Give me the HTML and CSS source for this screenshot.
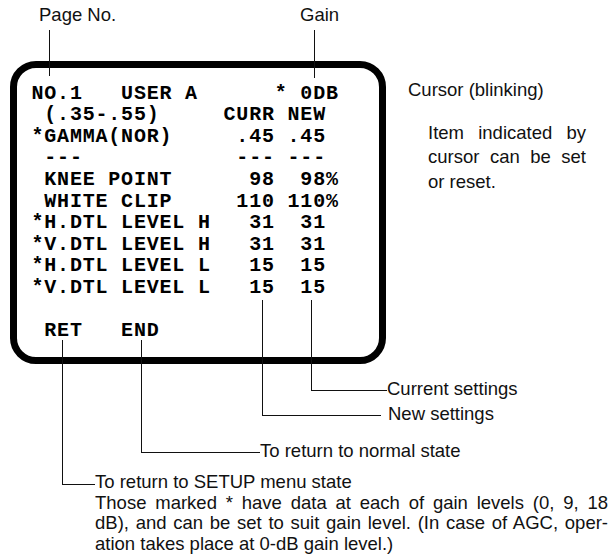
FILE: index.html
```html
<!DOCTYPE html>
<html lang="en">
<head>
  <meta charset="UTF-8">
  <title>Camera Setup Menu</title>
  <link rel="stylesheet" href="styles.css">
</head>
<body>
  <div class="figure">
    <div class="labels-top">
      <span class="label page-no">Page No.</span>
      <span class="label gain">Gain</span>
    </div>

    <div class="main">
      <div class="screen">
<pre class="screen-text">NO.1   USER A      * 0DB
 (.35-.55)     CURR NEW
*GAMMA(NOR)     .45 .45
 ---            --- ---
 KNEE POINT      98  98%
 WHITE CLIP     110 110%
*H.DTL LEVEL H   31  31
*V.DTL LEVEL H   31  31
*H.DTL LEVEL L   15  15
*V.DTL LEVEL L   15  15

 RET   END</pre>
      </div>
      <div class="cursor-note">
        <p class="note-title">Cursor (blinking)</p>
        <p class="note-body">
          <span class="just">Item indicated by</span>
          <span class="just">cursor can be set</span>
          <span>or reset.</span>
        </p>
      </div>
    </div>

    <div class="callouts">
      <p class="callout current">Current settings</p>
      <p class="callout new">New settings</p>
      <p class="callout normal">To return to normal state</p>
      <div class="callout setup">
        <span>To return to SETUP menu state</span>
        <span class="just">Those marked * have data at each of gain levels (0, 9, 18</span>
        <span class="just">dB), and can be set to suit gain level. (In case of AGC, oper-</span>
        <span>ation takes place at 0-dB gain level.)</span>
      </div>
    </div>

    <!-- leader lines -->
    <svg class="leaders" width="613" height="555" viewBox="0 0 613 555">
      <path d="M49.5 30V76" />
      <path d="M314.5 30V78" />
      <path d="M311.5 300V390.5H387" />
      <path d="M262.5 300V415.5H381" />
      <path d="M141.5 340V452.5H260" />
      <path d="M62.5 340V484.5H95" />
    </svg>
  </div>
</body>
</html>
```

FILE: styles.css
```css
* { box-sizing: border-box; margin: 0; padding: 0; }
body {
  background: #fff;
  color: #000;
  font-family: "Liberation Sans", Arial, sans-serif;
}
.figure {
  position: relative;
  width: 613px; height: 555px;
  overflow: hidden;
}
.label, .callout, .cursor-note {
  font-size: 18.5px;
  line-height: 20.5px;
  color: #111;
}
.labels-top {
  display: flex;
  padding: 5px 0 0 39px;
}
.page-no { width: 261px; }

.main {
  display: flex;
  align-items: flex-start;
  margin-top: 35.5px;
}
.screen {
  margin-left: 10px;
  width: 376px; height: 303px;
  border: 7px solid #000;
  border-radius: 26px;
  padding: 14.6px 0 0 14.5px;
}
.screen-text {
  font-family: "Courier New", "Liberation Mono", monospace;
  font-weight: bold;
  font-size: 20px;
  letter-spacing: 0.8px;
  line-height: 21.6px;
}
.cursor-note {
  margin-left: 22px;
  padding-top: 19px;
}
.note-body {
  margin: 20px 0 0 20px;
  width: 158px;
  line-height: 24.5px;
}
.note-body span, .setup span { display: block; white-space: nowrap; }
.just { text-align: justify; text-align-last: justify; }

.callouts { display: flex; flex-direction: column; }
.current { margin: 14.5px 0 0 387px; }
.new { margin: 4.5px 0 0 388px; }
.normal { margin: 16.5px 0 0 260px; }
.setup {
  margin: 11px 0 0 95px;
  width: 513px;
  line-height: 20.5px;
}

.leaders {
  position: absolute; left: 0; top: 0;
  pointer-events: none;
}
.leaders path {
  fill: none;
  stroke: #111;
  stroke-width: 1;
  shape-rendering: crispEdges;
}
```
